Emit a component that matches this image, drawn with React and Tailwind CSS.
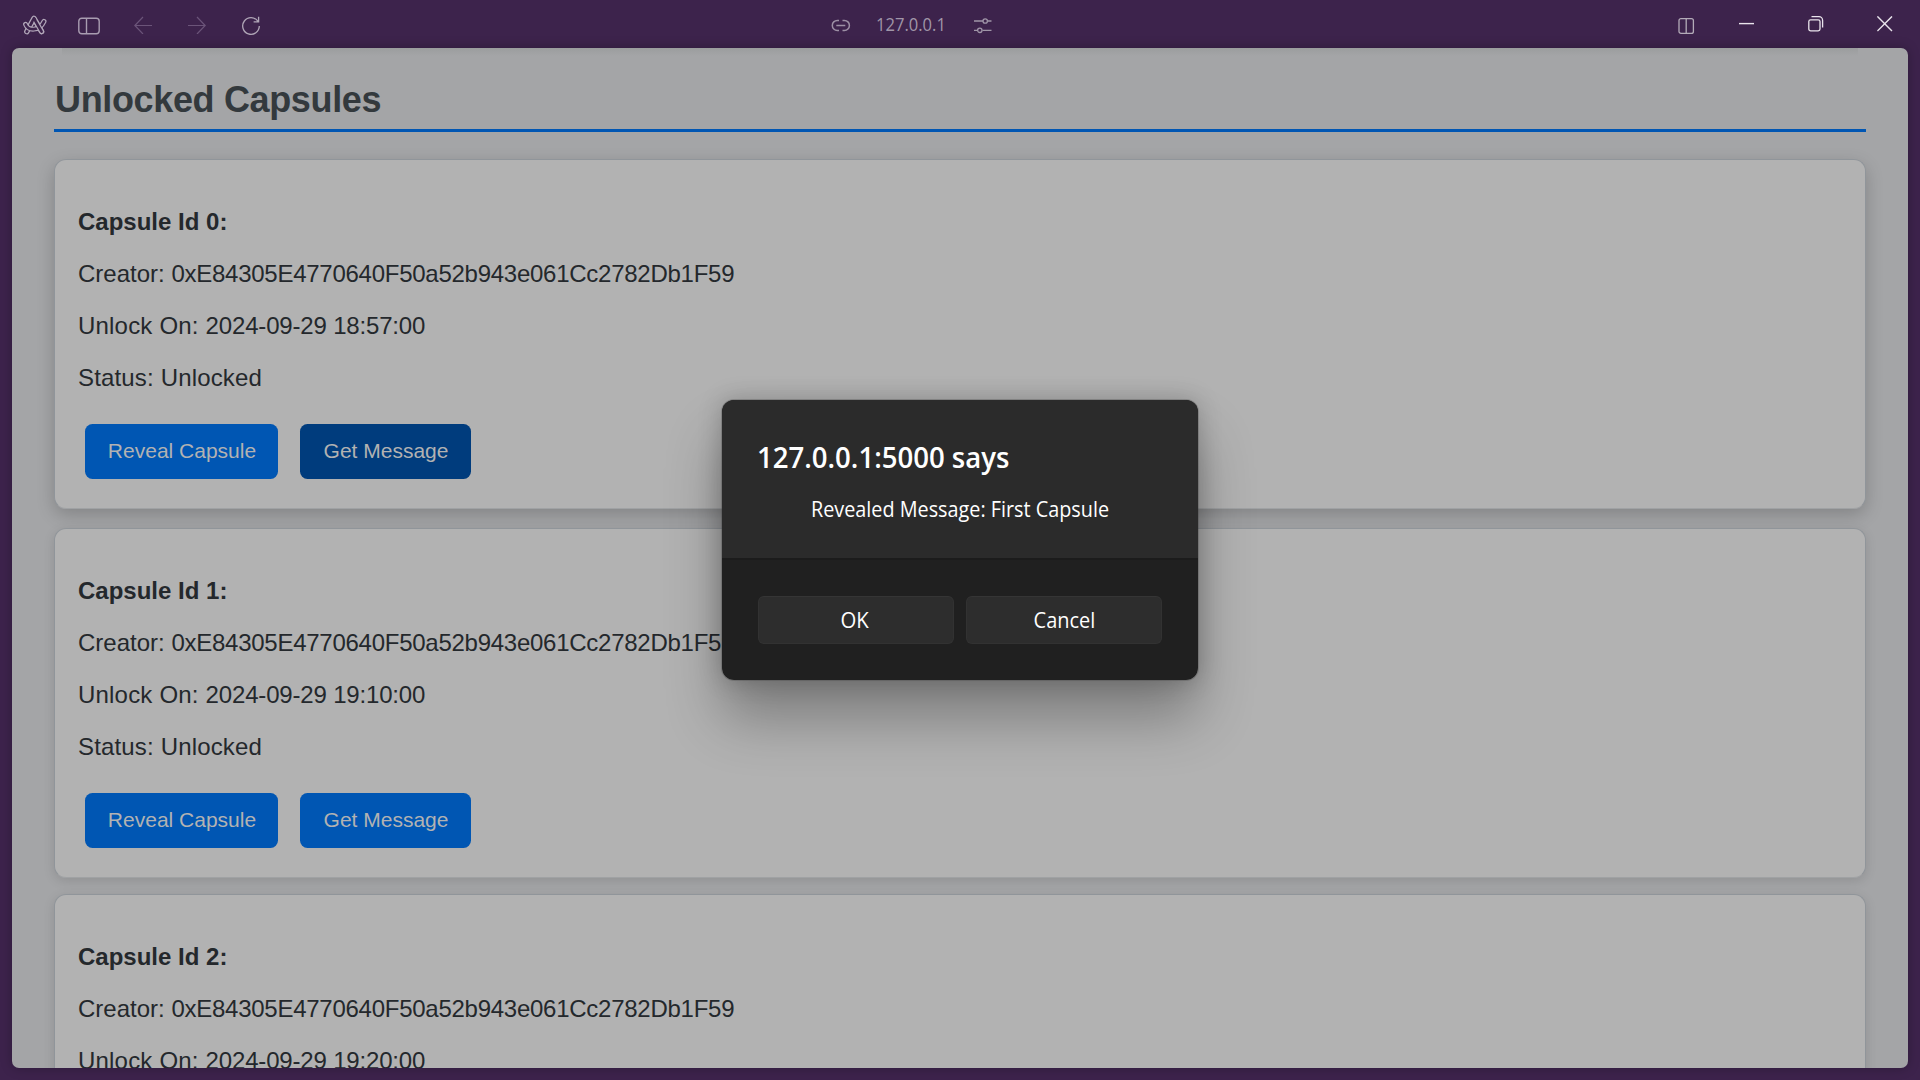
import React from "react";

const ARIAL = "font-['Liberation_Sans',Arial,sans-serif]";
const SEGOE = "font-['Open_Sans','Noto_Sans',sans-serif]";

const capsules = [
  {
    id: 0,
    creator: "0xE84305E4770640F50a52b943e061Cc2782Db1F59",
    unlock: "2024-09-29 18:57:00",
    raised: true,
  },
  {
    id: 1,
    creator: "0xE84305E4770640F50a52b943e061Cc2782Db1F59",
    unlock: "2024-09-29 19:10:00",
  },
  {
    id: 2,
    creator: "0xE84305E4770640F50a52b943e061Cc2782Db1F59",
    unlock: "2024-09-29 19:20:00",
  },
];

function ArcLogo() {
  const swoosh = "M3.6 10.4C6 16.4 17 18 22 7.4";
  const letter = "M4.8 17.6 12 4.4 19.6 17.6";
  return (
    <svg width="26" height="24" viewBox="0 0 26 24" fill="none" strokeLinecap="round" strokeLinejoin="round">
      <path d={letter} stroke="#b3a8ba" strokeWidth="5.4" />
      <path d={letter} stroke="#3d234c" strokeWidth="3" />
      <path d={swoosh} stroke="#b3a8ba" strokeWidth="5" />
      <path d={swoosh} stroke="#3d234c" strokeWidth="2.6" />
      <path d="M14.2 8.2 19.6 17.6" stroke="#b3a8ba" strokeWidth="5" />
      <path d="M12.4 5.1 19.6 17.6" stroke="#3d234c" strokeWidth="2.7" />
    </svg>
  );
}

function TitleBar() {
  return (
    <header className="flex h-12 shrink-0 items-start">
      <div className="flex flex-1 items-start">
        <div className="ml-[22px] mt-[14px] h-6 w-[26px]"><ArcLogo /></div>
        <svg className="ml-[30px] mt-[17px]" width="22" height="18" viewBox="0 0 22 18" fill="none" stroke="#a99db1" strokeWidth="1.4">
          <rect x="0.8" y="1.2" width="20.4" height="15.6" rx="3" />
          <path d="M8.5 1.2V16.8" />
        </svg>
        <svg className="ml-[34px] mt-4" width="18" height="18" viewBox="0 0 18 18" fill="none" stroke="#6b5479" strokeWidth="1.2">
          <path d="M18 9.5H.8M9 1 .8 9.5 9 18" />
        </svg>
        <svg className="ml-9 mt-4" width="18" height="18" viewBox="0 0 18 18" fill="none" stroke="#6b5479" strokeWidth="1.2">
          <path d="M0 9.5H17.2M9 1 17.2 9.5 9 18" />
        </svg>
        <svg className="ml-9 mt-4" width="18" height="19" viewBox="0 0 18 19" fill="none" stroke="#b0a6b7" strokeWidth="1.3">
          <path d="M17.3 10A8.3 8.3 0 1 1 15.8 5.2M16.6.8V5.8H11.6" />
        </svg>
      </div>
      <div className="mr-[70px] flex items-start">
        <svg className="mt-[19px]" width="20" height="13" viewBox="0 0 20 13" fill="none" stroke="#9d90a5" strokeWidth="1.5">
          <path d="M8 1.4H6.3a5 5 0 0 0 0 10H8M11.5 1.4h1.9a5 5 0 0 1 0 10h-1.9M5.3 6.4h9" />
        </svg>
        <div className={`ml-[25px] mr-px mt-3 w-[70px] ${SEGOE}`}>
          <span className="inline-block origin-left scale-x-[0.92] text-[18px] leading-6 whitespace-nowrap text-[#a096a8]">127.0.0.1</span>
        </div>
        <svg className="ml-[27px] mt-[17px]" width="18" height="17" viewBox="0 0 18 17" fill="none" stroke="#a096a8" strokeWidth="1.3">
          <path d="M0 4H9M13.5 4H17.5M0 13.3H3.5M8.5 13.3H17.5" />
          <circle cx="11.2" cy="4" r="2.2" />
          <circle cx="5.8" cy="13.3" r="2.2" />
        </svg>
      </div>
      <div className="flex flex-1 items-start justify-end pr-[27px]">
        <svg className="mt-[17px]" width="17" height="18" viewBox="0 0 17 18" fill="none" stroke="#b3abb8" strokeWidth="1.3">
          <rect x="1" y="1.6" width="14.4" height="14.8" rx="2" />
          <path d="M8.2 1.6V16.4" />
        </svg>
        <svg className="ml-[44px] mt-4" width="16" height="16" viewBox="0 0 16 16" stroke="#e9e4ec" strokeWidth="1.4">
          <path d="M0 7.6H15" />
        </svg>
        <svg className="ml-[53px] mt-[15px]" width="16" height="17" viewBox="0 0 16 17" fill="none" stroke="#e9e4ec" strokeWidth="1.3">
          <rect x="0.8" y="4.8" width="11.2" height="11" rx="1.8" />
          <path d="M3.5 1.6H11a3.6 3.6 0 0 1 3.6 3.6V12.6" />
        </svg>
        <svg className="ml-[53px] mt-4" width="16" height="16" viewBox="0 0 16 16" stroke="#e9e4ec" strokeWidth="1.4">
          <path d="M.4.4 15 15M15 .4.4 15" />
        </svg>
      </div>
    </header>
  );
}

function CapsuleCard({ capsule }) {
  const elevation = capsule.raised
    ? "mb-[19px] shadow-[0_6px_18px_rgba(0,0,0,0.2)]"
    : "mb-4 shadow-[0_3px_12px_rgba(0,0,0,0.12)]";
  return (
    <article className={`h-[350px] shrink-0 rounded-xl border border-[#90959a] border-b-[#a0a2a4] bg-[#b2b2b2] pl-[23px] pt-12 text-[24px] leading-7 text-[#24282c] ${elevation}`}>
      <h3 className="mb-6 font-bold">Capsule Id {capsule.id}:</h3>
      <p className="mb-6 whitespace-pre">
        Creator: <span className="tracking-[-0.26px]">{capsule.creator}</span>
      </p>
      <p className="mb-6 whitespace-pre">
        <span className="tracking-[0.2px]">Unlock On: </span>
        <span className="tracking-[-0.17px]">{capsule.unlock}</span>
      </p>
      <p className="whitespace-pre tracking-[0.16px]">Status: Unlocked</p>
      <div className="ml-[7px] mt-8 flex gap-[22px] text-[21px] text-[#b2b2b2]">
        <button className="h-[55px] w-[193px] rounded-[7.5px] bg-[#0056b3] pb-0.5 pl-px">Reveal Capsule</button>
        <button className={`h-[55px] w-[171px] rounded-[7.5px] pb-0.5 pl-px ${capsule.raised ? "bg-[#003c7d]" : "bg-[#0056b3]"}`}>
          Get Message
        </button>
      </div>
    </article>
  );
}

function AlertDialog() {
  return (
    <div role="alertdialog" className={`absolute left-[722px] top-[400px] h-[280px] w-[476px] rounded-[12px] shadow-[0_0_0_1px_rgba(60,60,60,0.25),0_0_24px_rgba(0,0,0,0.22),0_38px_56px_rgba(0,0,0,0.3)] ${SEGOE}`}>
      <div className="flex h-full flex-col overflow-hidden rounded-[12px] bg-[#202020] text-white">
        <div className="h-[160px] border-b-2 border-[#1c1c1c] bg-[#2b2b2b] px-[35px] pt-[35px]">
          <h2 className="inline-block origin-left scale-x-[0.95] text-[29px] font-semibold leading-[44px] whitespace-nowrap">127.0.0.1:5000 says</h2>
          <p className="mt-3.5 text-center text-[21px] leading-8 whitespace-nowrap">
            <span className="inline-block scale-x-[0.943]">Revealed Message: First Capsule</span>
          </p>
        </div>
        <div className="flex gap-3 px-9 pt-9 text-[21px]">
          <button className="h-12 w-[196px] rounded-md border border-[#323232] border-t-[#353535] bg-[#2d2d2d] pt-px pr-0.5">
            <span className="inline-block scale-x-[0.97]">OK</span>
          </button>
          <button className="h-12 w-[196px] rounded-md border border-[#323232] border-t-[#353535] bg-[#2d2d2d] pt-px">
            <span className="inline-block scale-x-[0.95]">Cancel</span>
          </button>
        </div>
      </div>
    </div>
  );
}

export default function App() {
  return (
    <div className="relative flex h-[1080px] w-[1920px] flex-col overflow-hidden bg-[#3d234c]">
      <TitleBar />
      <main className={`mx-3 mb-3 flex min-h-0 flex-1 flex-col overflow-hidden rounded-[7px] bg-[#a4a5a7] px-[42px] shadow-[0_0_12px_rgba(0,0,0,0.25)] ${ARIAL}`}>
        <div className="mx-2 h-2 shrink-0 bg-linear-to-b from-[#9b9d9e] to-[#a4a5a7]" />
        <h1 className="mb-[27px] mt-[23px] shrink-0 border-b-[3px] border-[#0056b3] pb-2 pl-px text-[36px] font-bold leading-[42px] tracking-[-0.35px] text-[#33393d]">
          Unlocked Capsules
        </h1>
        {capsules.map((c) => (
          <CapsuleCard key={c.id} capsule={c} />
        ))}
      </main>
      <AlertDialog />
    </div>
  );
}
